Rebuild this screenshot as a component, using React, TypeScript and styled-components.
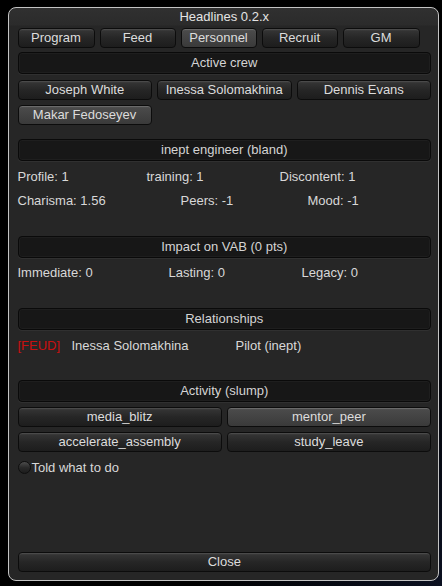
import React from "react";
import styled, { createGlobalStyle } from "styled-components";

const Global = createGlobalStyle`
  html, body { margin: 0; padding: 0; background: #000; }
  body {
    width: 442px; height: 586px; overflow: hidden;
    background: radial-gradient(ellipse at 100% 100%, #0b1020 0%, #000 40%), #000;
    font-family: "Liberation Sans", Arial, sans-serif;
  }
`;

const Window = styled.div`
  box-sizing: border-box;
  margin: 7px 0 0 8px;
  width: 431px;
  height: 574px;
  border: 1.5px solid #c4c4c4;
  border-radius: 8px;
  background: linear-gradient(#303030 0px, #2b2b2b 17px, #262626 18px, #262626 100%);
  padding: 0 7px 8px 8.5px;
  display: flex;
  flex-direction: column;
  color: #d8d8d8;
  font-size: 13px;
`;

const Title = styled.div`
  height: 19px;
  line-height: 17px;
  text-align: center;
  color: #e4e4e4;
  font-size: 13px;
`;

const Row = styled.div<{ $mt?: number; $gap?: number }>`
  display: flex;
  flex: none;
  gap: ${(p) => p.$gap ?? 5}px;
  margin-top: ${(p) => p.$mt ?? 0}px;
`;

const Button = styled.div<{ $w?: number; $on?: boolean }>`
  box-sizing: border-box;
  ${(p) => (p.$w ? `width: ${p.$w}px; flex: none;` : "flex: 1;")}
  height: 20px;
  line-height: 18px;
  text-align: center;
  color: #dcdcdc;
  border: 1px solid #0c0c0c;
  border-radius: 4px;
  background: ${(p) =>
    p.$on
      ? "linear-gradient(#5a5a5a 0px, #4a4a4a 2px, #434343 50%, #3a3a3a 100%)"
      : "linear-gradient(#484848 0px, #333 2px, #262626 50%, #1d1d1d 100%)"};
  box-shadow: inset 0 1px 0 ${(p) => (p.$on ? "#6a6a6a" : "#4a4a4a")};
  white-space: nowrap;
`;

const Header = styled.div<{ $mt?: number }>`
  box-sizing: border-box;
  flex: none;
  margin-top: ${(p) => p.$mt ?? 0}px;
  height: 22px;
  line-height: 20px;
  text-align: center;
  color: #d4d4d4;
  background: #171717;
  border: 1px solid #0a0a0a;
  border-radius: 4px;
  box-shadow: inset 0 0 0 1px #1e1e1e, 0 1px 0 #303030;
`;

const LabelRow = styled.div<{ $mt?: number }>`
  display: flex;
  flex: none;
  height: 20px;
  line-height: 20px;
  margin-top: ${(p) => p.$mt ?? 0}px;
`;

const Label = styled.span<{ $w?: number; $red?: boolean }>`
  ${(p) => (p.$w ? `width: ${p.$w}px; flex: none;` : "flex: 1;")}
  color: ${(p) => (p.$red ? "#c81010" : "#d8d8d8")};
  white-space: nowrap;
`;

const Toggle = styled.div`
  display: flex;
  flex: none;
  align-items: center;
  height: 20px;
  margin-top: 5px;
`;

const Box = styled.span`
  box-sizing: border-box;
  width: 13px;
  height: 13px;
  margin-right: 1px;
  border-radius: 50%;
  border: 1px solid #0e0e0e;
  background: linear-gradient(#4c4c4c, #2a2a2a 50%, #1c1c1c);
`;

const Spacer = styled.div`
  flex: 1;
`;

export default function App() {
  return (
    <>
      <Global />
      <Window>
        <Title>Headlines 0.2.x</Title>
        <Row $mt={1}>
          <Button $w={77}>Program</Button>
          <Button $w={76}>Feed</Button>
          <Button $w={76} $on>Personnel</Button>
          <Button $w={76}>Recruit</Button>
          <Button $w={77}>GM</Button>
        </Row>
        <Header $mt={4}>Active crew</Header>
        <Row $mt={6}>
          <Button>Joseph White</Button>
          <Button>Inessa Solomakhina</Button>
          <Button>Dennis Evans</Button>
        </Row>
        <Row $mt={5}>
          <Button $w={134} $on>Makar Fedoseyev</Button>
        </Row>
        <Header $mt={14}>inept engineer (bland)</Header>
        <LabelRow $mt={6}>
          <Label $w={129}>Profile: 1</Label>
          <Label $w={133}>training: 1</Label>
          <Label>Discontent: 1</Label>
        </LabelRow>
        <LabelRow $mt={4}>
          <Label $w={163}>Charisma: 1.56</Label>
          <Label $w={127}>Peers: -1</Label>
          <Label>Mood: -1</Label>
        </LabelRow>
        <Header $mt={25}>Impact on VAB (0 pts)</Header>
        <LabelRow $mt={5}>
          <Label $w={151}>Immediate: 0</Label>
          <Label $w={133}>Lasting: 0</Label>
          <Label>Legacy: 0</Label>
        </LabelRow>
        <Header $mt={25}>Relationships</Header>
        <LabelRow $mt={6}>
          <Label $w={54} $red>[FEUD]</Label>
          <Label $w={164}>Inessa Solomakhina</Label>
          <Label>Pilot (inept)</Label>
        </LabelRow>
        <Header $mt={24}>Activity (slump)</Header>
        <Row $mt={5}>
          <Button>media_blitz</Button>
          <Button $on>mentor_peer</Button>
        </Row>
        <Row $mt={5}>
          <Button>accelerate_assembly</Button>
          <Button>study_leave</Button>
        </Row>
        <Toggle>
          <Box />
          <span>Told what to do</span>
        </Toggle>
        <Spacer />
        <Row>
          <Button>Close</Button>
        </Row>
      </Window>
    </>
  );
}
